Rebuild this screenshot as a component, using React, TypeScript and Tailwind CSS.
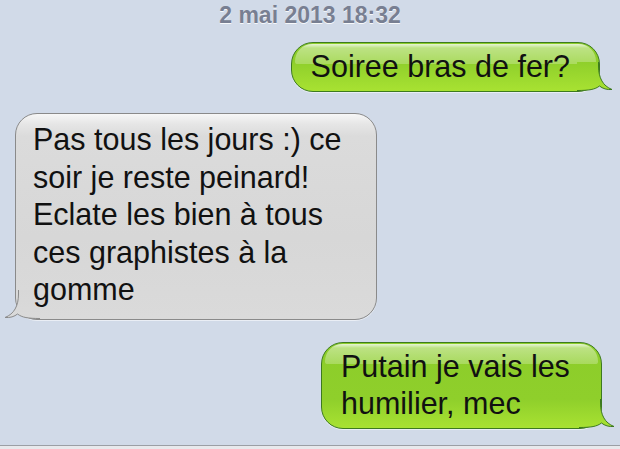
import React from "react";

function Tail({ kind, id }: { kind: "green" | "gray"; id: string }) {
  const top = kind === "green" ? "#8fcf2b" : "#d7d7d7";
  const bottom = kind === "green" ? "#a8e232" : "#dadada";
  const stroke = kind === "green" ? "#3d7a1f" : "#8a8a8a";
  const outline =
    "M21.5 0 L21.5 4 C21.5 16 26 24 35 27.5 C30 28 25.5 26.5 22.5 24 C18 27.5 12 28.5 0 28.5";
  return (
    <svg
      width="36"
      height="30"
      viewBox="0 0 36 30"
      className={
        kind === "green"
          ? "absolute right-[-14px] bottom-[-1px]"
          : "absolute left-[-12px] bottom-[-1px] -scale-x-100"
      }
    >
      <defs>
        <linearGradient id={id} x1="0" y1="0" x2="0" y2="29" gradientUnits="userSpaceOnUse">
          <stop offset="0" stopColor={top} />
          <stop offset="1" stopColor={bottom} />
        </linearGradient>
      </defs>
      <path d={outline + " L0 0 Z"} fill={`url(#${id})`} />
      <path d={outline} fill="none" stroke={stroke} strokeWidth="1" />
    </svg>
  );
}

function GreenBubble({ children, id }: { children: React.ReactNode; id: string }) {
  return (
    <div className="relative rounded-[22px] border border-[#3d7a1f] bg-[linear-gradient(to_top,#a8e232_0px,#8fcf2b_29px,#8ccd2a_100%)] pl-[19px] pr-[29px] pt-[5px] pb-[6px] text-[30.5px] leading-[37px] text-[#111] shadow-[0_1px_0_rgba(255,255,255,0.55)]">
      <div className="pointer-events-none absolute left-[3px] right-[3px] top-[1px] h-[20px] rounded-t-[20px] rounded-b-[3px] bg-[linear-gradient(to_bottom,rgba(255,255,255,0.8)_0px,rgba(255,255,255,0.42)_4px,rgba(255,255,255,0.24)_100%)]" />
      <Tail kind="green" id={id} />
      <div className="relative">{children}</div>
    </div>
  );
}

export default function App() {
  return (
    <div
      className="flex h-[449px] w-[620px] flex-col overflow-hidden bg-[#d1dae8]"
      style={{ fontFamily: '"Liberation Sans", Arial, sans-serif' }}
    >
      <div className="pt-[2px] text-center text-[23px] font-bold leading-[26px] text-[#787f92] [text-shadow:0_1px_0_rgba(255,255,255,0.85)]">
        2 mai 2013 18:32
      </div>

      <div className="mt-[14px] flex justify-end pr-[20px]">
        <GreenBubble id="t1">Soiree bras de fer?</GreenBubble>
      </div>

      <div className="mt-[21px] flex justify-start pl-[15px]">
        <div className="relative w-[362px] rounded-[22px] border border-[#8a8a8a] bg-[linear-gradient(to_bottom,#f7f7f7_0px,#e6e6e6_10px,#dbdbdb_22px,#d7d7d7_60%,#dadada_100%)] pl-[17px] pr-[17px] pt-[7px] pb-[10px] text-[30.5px] leading-[37.5px] text-[#111] shadow-[0_1px_0_rgba(255,255,255,0.55)]">
          <Tail kind="gray" id="t2" />
          <div className="relative">
            Pas tous les jours :) ce soir je reste peinard! Eclate les bien à tous ces graphistes à la gomme
          </div>
        </div>
      </div>

      <div className="mt-[22px] flex justify-end pr-[18px]">
        <GreenBubble id="t3">
          <div className="w-[231px]">Putain je vais les humilier, mec</div>
        </GreenBubble>
      </div>

      <div className="flex-1" />
      <div className="h-[1px] bg-[#9c9fa5]" />
      <div className="h-[3px] bg-[#e8e9ec]" />
    </div>
  );
}
